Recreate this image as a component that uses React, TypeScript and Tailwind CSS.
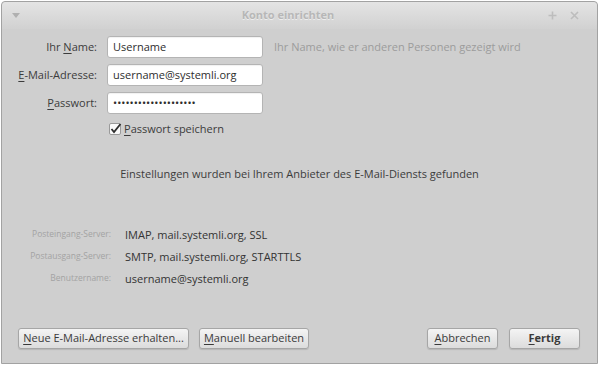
import React from "react";

function Mn({ children }: { children: React.ReactNode }) {
  return <span className="underline underline-offset-2 decoration-1">{children}</span>;
}

function Field({ label, value }: { label: React.ReactNode; value: string }) {
  return (
    <div className="flex h-[22px] items-center">
      <label className="w-[95px] text-right text-[#3c3c3c]">{label}</label>
      <div className="ml-[10px] flex h-[22px] w-[156px] items-center rounded-[3px] border border-[#b4b4b4] bg-white px-[5px] text-[#2e2e2e] shadow-[inset_0_1px_1px_rgba(0,0,0,0.06)]">
        {value}
      </div>
    </div>
  );
}

function Button({ children, wide, main }: { children: React.ReactNode; wide?: string; main?: boolean }) {
  return (
    <button
      className={
        "flex h-[21px] items-center justify-center whitespace-nowrap rounded-[3px] border border-[#a6a6a6] bg-gradient-to-b from-[#f4f4f4] to-[#dcdcdc] px-[6px] text-[#3a3a3a] shadow-[0_1px_1px_rgba(0,0,0,0.12)] " +
        (wide ?? "") +
        (main ? " font-bold" : "")
      }
    >
      <span>{children}</span>
    </button>
  );
}

export default function App() {
  return (
    <div className="h-[365px] w-[600px] bg-white pl-px pt-px font-['Open_Sans',sans-serif] text-[11px]">
      <div className="flex h-[363px] w-[597px] flex-col rounded-t-[4px] border border-[#a2a2a2] bg-[#cfcfcf]">
        {/* title bar */}
        <div className="flex h-[27px] items-center rounded-t-[4px] bg-gradient-to-b from-[#e4e4e4] to-[#d1d1d1] px-[8px]">
          <svg width="8" height="5" viewBox="0 0 8 5" className="ml-[2px]">
            <path d="M0 0 L8 0 L4 5 Z" fill="#b0b0b0" />
          </svg>
          <div className="flex-1 pl-[8px] text-center font-bold text-[#b7b7b7] [text-shadow:0_1px_0_#ededed]">
            Konto einrichten
          </div>
          <div className="flex items-center gap-[13px] pr-[10px]">
            <svg width="9" height="9" viewBox="0 0 9 9">
              <path d="M4.5 0.5 V8.5 M0.5 4.5 H8.5" stroke="#bdbdbd" strokeWidth="1.6" />
            </svg>
            <svg width="9" height="9" viewBox="0 0 9 9">
              <path d="M1 1 L8 8 M8 1 L1 8" stroke="#bdbdbd" strokeWidth="1.6" />
            </svg>
          </div>
        </div>

        {/* form */}
        <div className="mt-[7px] flex flex-col gap-[6px]">
          <div className="flex items-center">
            <Field
              label={
                <>
                  Ihr <Mn>N</Mn>ame:
                </>
              }
              value="Username"
            />
            <span className="ml-[11px] text-[#9c9c9c]">Ihr Name, wie er anderen Personen gezeigt wird</span>
          </div>
          <Field
            label={
              <>
                <Mn>E</Mn>-Mail-Adresse:
              </>
            }
            value="username@systemli.org"
          />
          <Field
            label={
              <>
                <Mn>P</Mn>asswort:
              </>
            }
            value={"•".repeat(20)}
          />
        </div>
        <div className="ml-[106px] mt-[7px] flex items-center gap-[2px] text-[#3c3c3c]">
          <svg width="14" height="14" viewBox="0 0 14 14">
            <rect x="1.5" y="1.5" width="11" height="11" rx="1.5" fill="#fafafa" stroke="#9a9a9a" />
            <path d="M3.5 7 L6 10 L12.5 2" stroke="#2e2e2e" strokeWidth="1.8" fill="none" />
          </svg>
          <span>
            <Mn>P</Mn>asswort speichern
          </span>
        </div>

        <div className="mt-[28px] text-center text-[#3c3c3c]">
          Einstellungen wurden bei Ihrem Anbieter des E-Mail-Diensts gefunden
        </div>

        {/* server info */}
        <div className="mt-[44px] grid grid-cols-[109px_1fr] items-center gap-x-[14px] gap-y-[5px] text-[#333]">
          <span className="text-right text-[8.5px] text-[#a3a3a3]">Posteingang-Server:</span>
          <span className="leading-[17px]">IMAP, mail.systemli.org, SSL</span>
          <span className="text-right text-[8.5px] text-[#a3a3a3]">Postausgang-Server:</span>
          <span className="leading-[17px]">SMTP, mail.systemli.org, STARTTLS</span>
          <span className="text-right text-[8.5px] text-[#a3a3a3]">Benutzername:</span>
          <span className="leading-[17px]">username@systemli.org</span>
        </div>

        {/* buttons */}
        <div className="mt-auto mb-[14px] flex items-center px-[16px]">
          <Button wide="w-[171px]">
            <Mn>N</Mn>eue E-Mail-Adresse erhalten...
          </Button>
          <div className="ml-[10px]">
            <Button wide="w-[110px]">
              <Mn>M</Mn>anuell bearbeiten
            </Button>
          </div>
          <div className="ml-auto flex gap-[11px] pr-[1px]">
            <Button wide="w-[71px]">
              <Mn>A</Mn>bbrechen
            </Button>
            <Button wide="w-[71px]" main>
              <Mn>F</Mn>ertig
            </Button>
          </div>
        </div>
      </div>
    </div>
  );
}
